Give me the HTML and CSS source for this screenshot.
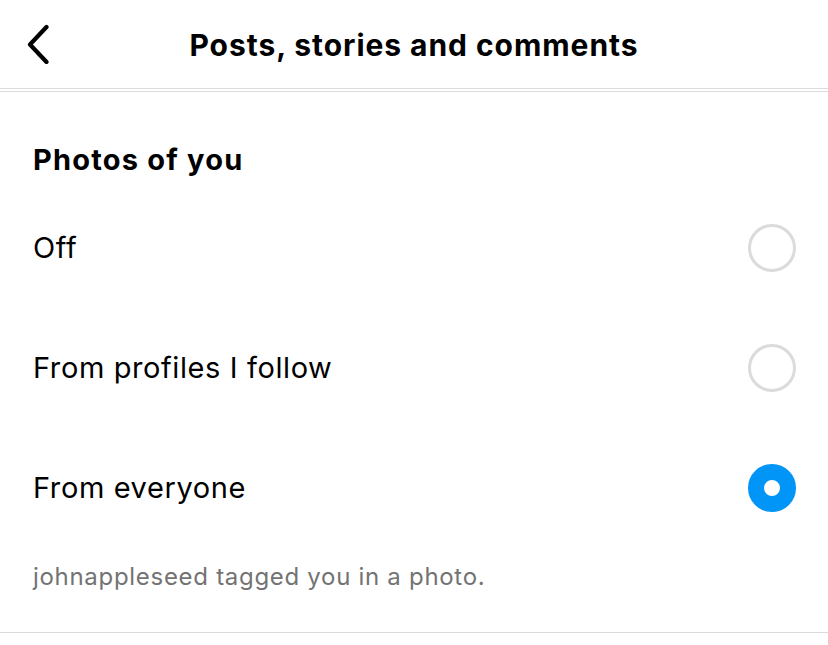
FILE: index.html
```html
<!DOCTYPE html>
<html>
<head>
<meta charset="utf-8">
<link rel="stylesheet" href="styles.css">
</head>
<body>
<header class="topbar">
  <button class="back" aria-label="Back">
    <svg width="30" height="40" viewBox="0 0 30 40"><path d="M22.5 3 L6 20.5 L22.5 38" fill="none" stroke="#000" stroke-width="4.2" stroke-linecap="round" stroke-linejoin="round"/></svg>
  </button>
  <h1 class="title">Posts, stories and comments</h1>
</header>
<main class="content">
  <h2 class="section-title">Photos of you</h2>
  <div class="option">
    <span class="label">Off</span>
    <span class="radio"></span>
  </div>
  <div class="option">
    <span class="label">From profiles I follow</span>
    <span class="radio"></span>
  </div>
  <div class="option">
    <span class="label">From everyone</span>
    <span class="radio checked"></span>
  </div>
  <p class="caption">johnappleseed tagged you in a photo.</p>
</main>
</body>
</html>
```
FILE: styles.css
```css
* { box-sizing: border-box; }
html, body { margin: 0; padding: 0; background: #fff; }
body {
  font-family: Inter, "Noto Sans", Roboto, sans-serif;
  color: #000;
  width: 828px;
}
.topbar {
  height: 89px;
  border-bottom: 1px solid #dbdbdb;
  display: flex;
  align-items: center;
  justify-content: center;
  position: relative;
}
.back {
  position: absolute;
  left: 24px;
  top: 24px;
  border: 0;
  background: none;
  padding: 0;
  width: 30px;
  height: 40px;
}
.back svg { display: block; }
.title {
  margin: 0;
  font-size: 30px;
  font-weight: 700;
  letter-spacing: 0.95px;
  line-height: 40px;
  padding-top: 2px;
}
.content {
  margin-top: 2px;
  border-top: 1px solid #dbdbdb;
  border-bottom: 1px solid #dbdbdb;
  padding: 48px 32px 40px 33px;
}
.section-title {
  margin: 0 0 8px;
  font-size: 29px;
  font-weight: 700;
  line-height: 40px;
  letter-spacing: 1.2px;
}
.option {
  height: 120px;
  display: flex;
  align-items: center;
  justify-content: space-between;
}
.label {
  font-size: 29px;
  line-height: 40px;
  letter-spacing: 0.6px;
}
.radio {
  width: 48px;
  height: 48px;
  border-radius: 50%;
  border: 3px solid #dbdbdb;
}
.radio.checked {
  border: 16px solid #0095f6;
  background: #fff;
}
.caption {
  margin: 14px 0 0;
  font-size: 24px;
  line-height: 30px;
  color: #737373;
  letter-spacing: 0.7px;
}
```
